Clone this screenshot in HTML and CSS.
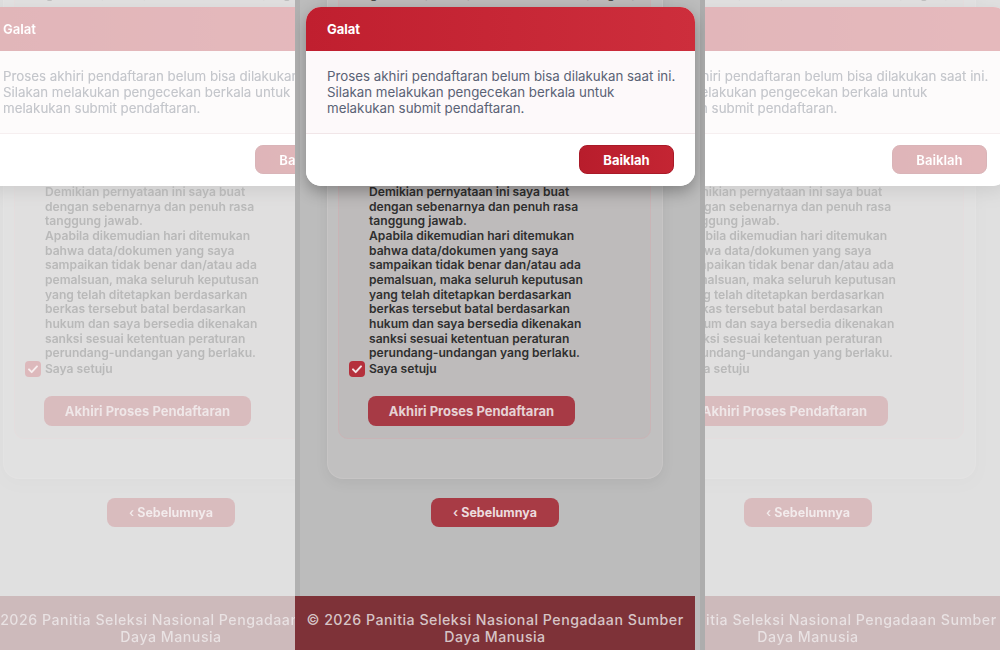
FILE: index.html
```html
<!DOCTYPE html>
<html lang="id">
<head>
<meta charset="utf-8">
<title>Galat</title>
<link rel="stylesheet" href="styles.css">
</head>
<body>
<svg class="defs" aria-hidden="true">
  <filter id="fade" color-interpolation-filters="sRGB">
    <feComponentTransfer>
      <feFuncR type="table" tableValues="0.686 0.709 0.732 0.756 0.782 0.808 0.836 0.866 0.900 0.939 1"/>
      <feFuncG type="table" tableValues="0.686 0.709 0.732 0.756 0.782 0.808 0.836 0.866 0.900 0.939 1"/>
      <feFuncB type="table" tableValues="0.686 0.709 0.732 0.756 0.782 0.808 0.836 0.866 0.900 0.939 1"/>
    </feComponentTransfer>
  </filter>
</svg>
<div class="stage">

  <div class="panel side side-left">
    <div class="screen">
      <div class="content">
        <div class="card">
          <div class="box">
            <p class="topline">dengan ini saya menyatakan bahwa data yang saya isi benar dan terverifikasi</p>
            <p class="decl">Demikian pernyataan ini saya buat<br>dengan sebenarnya dan penuh rasa<br>tanggung jawab.<br>Apabila dikemudian hari ditemukan<br>bahwa data/dokumen yang saya<br>sampaikan tidak benar dan/atau ada<br>pemalsuan, maka seluruh keputusan<br>yang telah ditetapkan berdasarkan<br>berkas tersebut batal berdasarkan<br>hukum dan saya bersedia dikenakan<br>sanksi sesuai ketentuan peraturan<br>perundang-undangan yang berlaku.</p>
            <div class="agree"><svg class="cb" viewBox="0 0 16 16"><rect width="16" height="16" rx="4" fill="#b5303c"/><path d="M4 8.4l2.7 2.7L12 5.4" fill="none" stroke="#f4e4e6" stroke-width="2" stroke-linecap="round" stroke-linejoin="round"/></svg><span>Saya setuju</span></div>
            <div class="btn btn-submit">Akhiri Proses Pendaftaran</div>
          </div>
        </div>
        <div class="nav"><div class="btn btn-prev"><span class="chev">‹</span> Sebelumnya</div></div>
        <footer class="foot">© 2026 Panitia Seleksi Nasional Pengadaan Sumber<br>Daya Manusia</footer>
      </div>
      <div class="gutter"></div>
      <div class="modal">
        <div class="modal-head">Galat</div>
        <div class="modal-body">Proses akhiri pendaftaran belum bisa dilakukan saat ini.<br>Silakan melakukan pengecekan berkala untuk<br>melakukan submit pendaftaran.</div>
        <div class="modal-foot"><div class="btn btn-ok">Baiklah</div></div>
      </div>
    </div>
  </div>

  <div class="panel center">
    <div class="screen">
      <div class="content">
        <div class="card">
          <div class="box">
            <p class="topline">dengan ini saya menyatakan bahwa data yang saya isi benar dan terverifikasi</p>
            <p class="decl">Demikian pernyataan ini saya buat<br>dengan sebenarnya dan penuh rasa<br>tanggung jawab.<br>Apabila dikemudian hari ditemukan<br>bahwa data/dokumen yang saya<br>sampaikan tidak benar dan/atau ada<br>pemalsuan, maka seluruh keputusan<br>yang telah ditetapkan berdasarkan<br>berkas tersebut batal berdasarkan<br>hukum dan saya bersedia dikenakan<br>sanksi sesuai ketentuan peraturan<br>perundang-undangan yang berlaku.</p>
            <div class="agree"><svg class="cb" viewBox="0 0 16 16"><rect width="16" height="16" rx="4" fill="#b5303c"/><path d="M4 8.4l2.7 2.7L12 5.4" fill="none" stroke="#f4e4e6" stroke-width="2" stroke-linecap="round" stroke-linejoin="round"/></svg><span>Saya setuju</span></div>
            <div class="btn btn-submit">Akhiri Proses Pendaftaran</div>
          </div>
        </div>
        <div class="nav"><div class="btn btn-prev"><span class="chev">‹</span> Sebelumnya</div></div>
        <footer class="foot">© 2026 Panitia Seleksi Nasional Pengadaan Sumber<br>Daya Manusia</footer>
      </div>
      <div class="gutter"></div>
      <div class="modal">
        <div class="modal-head">Galat</div>
        <div class="modal-body">Proses akhiri pendaftaran belum bisa dilakukan saat ini.<br>Silakan melakukan pengecekan berkala untuk<br>melakukan submit pendaftaran.</div>
        <div class="modal-foot"><div class="btn btn-ok">Baiklah</div></div>
      </div>
    </div>
  </div>

  <div class="panel side side-right">
    <div class="screen">
      <div class="content">
        <div class="card">
          <div class="box">
            <p class="topline">dengan ini saya menyatakan bahwa data yang saya isi benar dan terverifikasi</p>
            <p class="decl">Demikian pernyataan ini saya buat<br>dengan sebenarnya dan penuh rasa<br>tanggung jawab.<br>Apabila dikemudian hari ditemukan<br>bahwa data/dokumen yang saya<br>sampaikan tidak benar dan/atau ada<br>pemalsuan, maka seluruh keputusan<br>yang telah ditetapkan berdasarkan<br>berkas tersebut batal berdasarkan<br>hukum dan saya bersedia dikenakan<br>sanksi sesuai ketentuan peraturan<br>perundang-undangan yang berlaku.</p>
            <div class="agree"><svg class="cb" viewBox="0 0 16 16"><rect width="16" height="16" rx="4" fill="#b5303c"/><path d="M4 8.4l2.7 2.7L12 5.4" fill="none" stroke="#f4e4e6" stroke-width="2" stroke-linecap="round" stroke-linejoin="round"/></svg><span>Saya setuju</span></div>
            <div class="btn btn-submit">Akhiri Proses Pendaftaran</div>
          </div>
        </div>
        <div class="nav"><div class="btn btn-prev"><span class="chev">‹</span> Sebelumnya</div></div>
        <footer class="foot">© 2026 Panitia Seleksi Nasional Pengadaan Sumber<br>Daya Manusia</footer>
      </div>
      <div class="gutter"></div>
      <div class="modal">
        <div class="modal-head">Galat</div>
        <div class="modal-body">Proses akhiri pendaftaran belum bisa dilakukan saat ini.<br>Silakan melakukan pengecekan berkala untuk<br>melakukan submit pendaftaran.</div>
        <div class="modal-foot"><div class="btn btn-ok">Baiklah</div></div>
      </div>
    </div>
  </div>

</div>
</body>
</html>
```

FILE: styles.css
```css
* { box-sizing: border-box; }

html, body {
  margin: 0;
  padding: 0;
  width: 1000px;
  height: 650px;
  overflow: hidden;
  background: #e0e0e0;
  font-family: Inter, "Noto Sans", "Liberation Sans", sans-serif;
}

.defs {
  display: block;
  width: 0;
  height: 0;
  overflow: hidden;
}

.stage {
  display: flex;
  width: 1000px;
  height: 650px;
}

.panel {
  flex: none;
  height: 650px;
  overflow: hidden;
}

.side { width: 295px; }
.center { width: 410px; }

.side .screen {
  filter: url(#fade) blur(.45px);
}
.side-left .screen { margin-left: -29px; }
.side-right .screen { margin-left: -97px; }

.screen {
  position: relative;
  width: 410px;
  height: 650px;
  display: flex;
  background: #bcbcbc;
  box-shadow: inset 5px 0 0 #b1b1b1;
}

.content {
  width: 400px;
  height: 650px;
  display: flex;
  flex-direction: column;
}

.gutter {
  width: 10px;
  height: 650px;
  background: linear-gradient(90deg, #bcbcbc 5px, #adadad 5px);
}

/* card */
.card {
  margin: -30px 32px 0;
  padding: 10px 11px 39px 10px;
  background: #c1c0c0;
  border: 1px solid #c7c5c5;
  border-top: 0;
  border-radius: 16px;
  box-shadow: 0 4px 14px rgba(0,0,0,.06);
}

.box {
  background: #bebbbb;
  border: 1px solid #c9b4b6;
  border-radius: 10px;
  padding: 0 12px 12px 9px;
}

.topline {
  margin: 5px 0 0;
  font-size: 12px;
  line-height: 15px;
  font-weight: 600;
  color: #4a4a4a;
  text-align: center;
  white-space: nowrap;
  overflow: hidden;
}

.decl {
  margin: 184px 0 0 21px;
  font-size: 12.1px;
  line-height: 14.65px;
  font-weight: 600;
  color: #2f2f2f;
  white-space: nowrap;
}

.agree {
  display: flex;
  align-items: center;
  gap: 5px;
  margin-top: 0;
  font-size: 12.1px;
  line-height: 14.7px;
  font-weight: 600;
  color: #2f2f2f;
}

.cb {
  width: 16px;
  height: 16px;
  flex: none;
  margin-left: 1px;
}
.agree span { margin-left: -1px; }

.btn {
  display: flex;
  align-items: center;
  justify-content: center;
  font-weight: 700;
  border-radius: 8px;
  white-space: nowrap;
}

.btn-submit {
  margin: 19px 0 0 20px;
  width: 207px;
  height: 30px;
  background: #a73a45;
  color: #e6d2d4;
  font-size: 13px;
}

.nav {
  display: flex;
  justify-content: center;
  margin-top: 19px;
}

.btn-prev {
  width: 128px;
  height: 29px;
  background: #a83b45;
  color: #ecdcde;
  font-size: 12.5px;
}
.chev { margin-right: 3px; font-weight: 600; }

.foot {
  margin-top: auto;
  height: 54px;
  padding-top: 15px;
  background: #7e3238;
  color: #d6c4c6;
  text-align: center;
  font-size: 14.2px;
  line-height: 17px;
  font-weight: 500;
  letter-spacing: .5px;
  white-space: nowrap;
}

/* modal */
.modal {
  position: absolute;
  top: 7px;
  left: 11px;
  width: 389px;
  background: #fff;
  border-radius: 15px;
  overflow: hidden;
  box-shadow: 0 6px 16px rgba(0,0,0,.3);
}

.modal-head {
  height: 44px;
  display: flex;
  align-items: center;
  padding-left: 21px;
  background: linear-gradient(90deg, #c01f2f, #cd2e3c);
  color: #fff;
  font-size: 13px;
  font-weight: 700;
}

.modal-body {
  padding: 17px 21px 17px;
  background: #fdf9fa;
  border-bottom: 1px solid #f1e6e8;
  color: #5a6275;
  font-size: 13.3px;
  line-height: 16px;
  white-space: nowrap;
}

.modal-foot {
  display: flex;
  justify-content: flex-end;
  padding: 11px 21px 12px;
  background: #fff;
}

.btn-ok {
  width: 95px;
  height: 29px;
  background: linear-gradient(90deg, #b81d2c, #c42533);
  border: 1px solid #a91a28;
  color: #fff;
  font-size: 13px;
}
```
